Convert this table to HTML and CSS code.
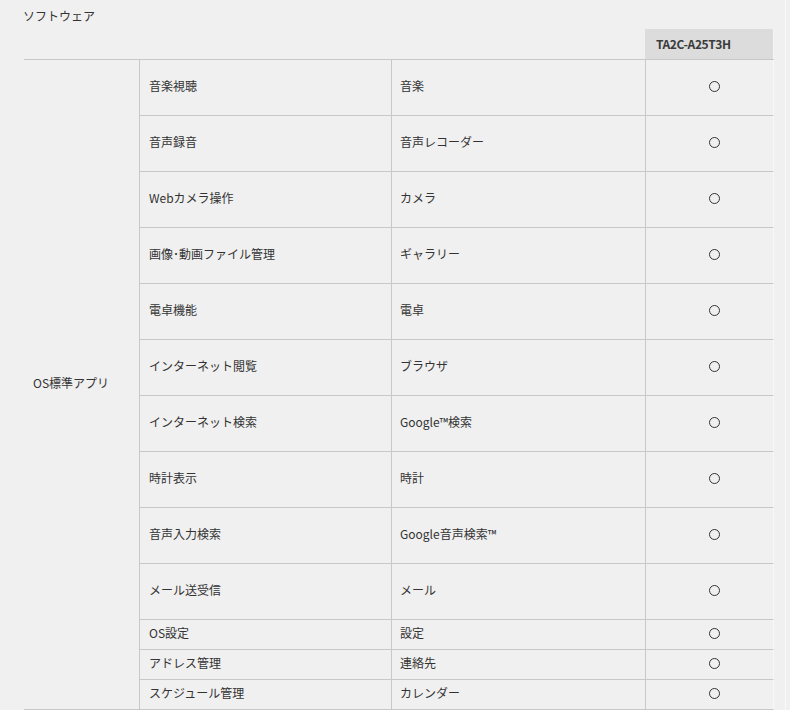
FILE: index.html
```html
<!DOCTYPE html>
<html lang="ja">
<head>
<meta charset="utf-8">
<title>ソフトウェア</title>
<link rel="stylesheet" href="styles.css">
</head>
<body>
<div class="page">
  <h2 class="title">ソフトウェア</h2>
  <div class="head-row">
    <div class="head-cell">TA2C-A25T3H</div>
  </div>
  <div class="spec">
    <div class="cat">OS標準アプリ</div>

    <div class="c name tall">音楽視聴</div><div class="c app tall">音楽</div><div class="c mark tall"><span class="o"></span></div>
    <div class="c name tall">音声録音</div><div class="c app tall">音声レコーダー</div><div class="c mark tall"><span class="o"></span></div>
    <div class="c name tall">Webカメラ操作</div><div class="c app tall">カメラ</div><div class="c mark tall"><span class="o"></span></div>
    <div class="c name tall">画像･動画ファイル管理</div><div class="c app tall">ギャラリー</div><div class="c mark tall"><span class="o"></span></div>
    <div class="c name tall">電卓機能</div><div class="c app tall">電卓</div><div class="c mark tall"><span class="o"></span></div>
    <div class="c name tall">インターネット閲覧</div><div class="c app tall">ブラウザ</div><div class="c mark tall"><span class="o"></span></div>
    <div class="c name tall">インターネット検索</div><div class="c app tall">Google™検索</div><div class="c mark tall"><span class="o"></span></div>
    <div class="c name tall">時計表示</div><div class="c app tall">時計</div><div class="c mark tall"><span class="o"></span></div>
    <div class="c name tall">音声入力検索</div><div class="c app tall">Google音声検索™</div><div class="c mark tall"><span class="o"></span></div>
    <div class="c name tall">メール送受信</div><div class="c app tall">メール</div><div class="c mark tall"><span class="o"></span></div>
    <div class="c name">OS設定</div><div class="c app">設定</div><div class="c mark"><span class="o"></span></div>
    <div class="c name">アドレス管理</div><div class="c app">連絡先</div><div class="c mark"><span class="o"></span></div>
    <div class="c name">スケジュール管理</div><div class="c app">カレンダー</div><div class="c mark"><span class="o"></span></div>
  </div>
</div>
</body>
</html>
```

FILE: styles.css
```css
html, body {
  margin: 0;
  padding: 0;
  background: #f0f0f0;
}
body {
  font-family: "Noto Sans CJK JP", "Noto Sans", sans-serif;
  font-size: 12px;
  color: #333;
}
.page {
  width: 786px;
  height: 710px;
  border-right: 1px solid #fafafa;
  box-sizing: border-box;
  padding: 8px 0 0 24px;
}
.title {
  margin: 0 0 0 -1px;
  font-size: 12px;
  font-weight: normal;
  line-height: 16px;
  height: 16px;
}
.head-row {
  margin-top: 5px;
  display: flex;
  justify-content: flex-end;
  width: 750px;
}
.head-cell {
  width: 129px;
  height: 30px;
  box-sizing: border-box;
  background: #dcdcdc;
  padding-left: 11px;
  line-height: 29px;
  font-weight: bold;
  color: #3a3a3a;
  letter-spacing: -0.4px;
  border-right: 1px solid #f6f6f6;
}
.spec {
  display: grid;
  grid-template-columns: 116px 252px 254px 128px;
  grid-template-rows: repeat(10, 56px) repeat(3, 30px);
  width: 750px;
  border-top: 1px solid #c8c8c8;
}
.cat {
  grid-column: 1;
  grid-row: 1 / 14;
  border-right: 1px solid #c8c8c8;
  border-bottom: 1px solid #c8c8c8;
  display: flex;
  align-items: center;
  padding: 0 0 4px 9px;
}
.c {
  display: flex;
  align-items: center;
  border-bottom: 1px solid #c8c8c8;
  padding: 0 0 4px 9px;
  box-sizing: border-box;
  height: 30px;
}
.c.tall {
  height: 56px;
}
.name {
  grid-column: 2;
  border-right: 1px solid #c8c8c8;
}
.app {
  grid-column: 3;
  border-right: 1px solid #c8c8c8;
  padding-left: 8px;
}
.mark {
  grid-column: 4;
  justify-content: center;
  padding-bottom: 2px;
  border-right: 1px solid #f8f8f8;
}
.o {
  width: 9px;
  height: 9px;
  border: 1px solid #333;
  border-radius: 50%;
}
```
